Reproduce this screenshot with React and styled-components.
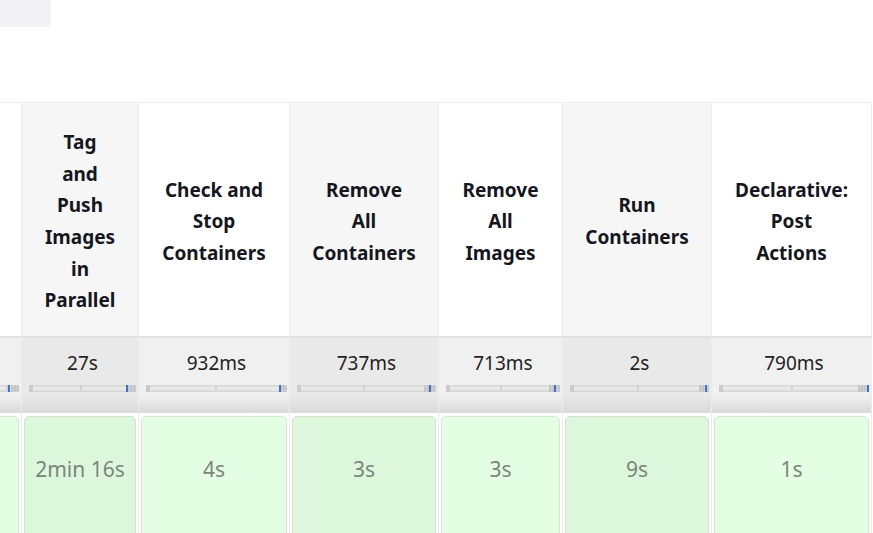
import React from 'react';
import styled, { createGlobalStyle } from 'styled-components';

const GlobalStyle = createGlobalStyle`
  html, body {
    margin: 0;
    padding: 0;
    background: #fff;
    font-family: "Noto Sans", "Open Sans", sans-serif;
  }
`;

const Page = styled.div`
  width: 873px;
  height: 533px;
  overflow: hidden;
  position: relative;
`;

const Crumb = styled.div`
  width: 51px;
  height: 27px;
  background: #f3f3f5;
`;

const Table = styled.div`
  margin-top: 75px;
  display: flex;
  width: 872px;
  border-top: 1px solid #eeeeee;
`;

const Column = styled.div`
  width: ${p => p.$width}px;
  flex: none;
  display: flex;
  flex-direction: column;
  border-left: ${p => (p.$first ? 'none' : '1px solid #ececec')};
  border-right: ${p => (p.$last ? '1px solid #ececec' : 'none')};
  box-sizing: border-box;
  overflow: hidden;
`;

const Header = styled.div`
  height: 233px;
  background: ${p => (p.$stripe ? '#f6f6f6' : '#ffffff')};
  display: flex;
  flex-direction: column;
  align-items: center;
  justify-content: center;
  padding-top: 5px;
  box-sizing: border-box;
  color: #16161f;
  font-size: 19px;
  font-weight: 700;
  line-height: 31.6px;
  text-align: center;
`;

const Line = styled.span`
  display: block;
  white-space: nowrap;
`;

const Average = styled.div`
  height: 77px;
  box-sizing: border-box;
  border-top: 2px solid #e0e0e0;
  background: ${p =>
    p.$stripe
      ? 'linear-gradient(to bottom, #e9e9e9 0%, #e9e9e9 76%, #d9d9d9 100%)'
      : 'linear-gradient(to bottom, #f0f0f0 0%, #f0f0f0 76%, #dadada 100%)'};
  display: flex;
  flex-direction: column;
  align-items: center;
  padding: 12px 2px 0 7px;
`;

const AvgText = styled.div`
  font-size: 19px;
  color: #1f1f24;
  line-height: 26px;
  height: 26px;
`;

const Bar = styled.div`
  position: relative;
  align-self: stretch;
  margin-top: 9px;
  height: 7px;
  display: flex;
  background: linear-gradient(to bottom, #d4d4d4 0%, #ececec 45%, #e4e4e4 70%, #d2d2d2 100%);
`;

const Cap = styled.div`
  width: 4px;
  background: #cbcbcb;
`;

const Track = styled.div`
  flex: 1;
  position: relative;
  &::after {
    content: '';
    position: absolute;
    left: 50%;
    top: 0;
    bottom: 0;
    width: 2px;
    background: #d2d2d2;
  }
`;

const EndCap = styled.div`
  width: ${p => p.$w}px;
  background: repeating-linear-gradient(to right, #c6c6c6 0, #c6c6c6 2px, #d0d0d0 2px, #d0d0d0 3px);
`;

const Tick = styled.div`
  position: absolute;
  top: 0;
  bottom: 0;
  right: ${p => p.$right}px;
  width: 2px;
  background: #3d72d4;
`;

const Body = styled.div`
  background: #ffffff;
  padding: 3px 2px 0 2px;
  flex: 1;
`;

const Cell = styled.div`
  height: 130px;
  box-sizing: border-box;
  border: 1px solid ${p => (p.$stripe ? '#cfe3cf' : '#d3e6d3')};
  border-radius: 5px;
  background: ${p => (p.$stripe ? '#ddf7dd' : '#e4fee4')};
  color: #7b867b;
  font-size: 21px;
  line-height: 28px;
  text-align: center;
  padding-top: 38px;
  white-space: nowrap;
`;

const PartialCell = styled(Cell)`
  margin-left: -20px;
`;

const stages = [
  { width: 21, lines: [], avg: '', time: '', endCap: 8, tick: 9, partial: true },
  { width: 117, lines: ['Tag', 'and', 'Push', 'Images', 'in', 'Parallel'], avg: '27s', time: '2min 16s', endCap: 9, tick: 8, stripe: true },
  { width: 151, lines: ['Check and', 'Stop', 'Containers'], avg: '932ms', time: '4s', endCap: 7, tick: 6 },
  { width: 149, lines: ['Remove', 'All', 'Containers'], avg: '737ms', time: '3s', endCap: 12, tick: 5, stripe: true },
  { width: 124, lines: ['Remove', 'All', 'Images'], avg: '713ms', time: '3s', endCap: 11, tick: 4 },
  { width: 149, lines: ['Run', 'Containers'], avg: '2s', time: '9s', endCap: 10, tick: 2, stripe: true },
  { width: 161, lines: ['Declarative:', 'Post', 'Actions'], avg: '790ms', time: '1s', endCap: 11, tick: 0, last: true },
];

const App = () => (
  <Page>
    <GlobalStyle />
    <Crumb />
    <Table>
      {stages.map((s, i) => (
        <Column key={i} $width={s.width} $first={i === 0} $last={s.last}>
          <Header $stripe={s.stripe}>
            {s.lines.map(l => (
              <Line key={l}>{l}</Line>
            ))}
          </Header>
          <Average $stripe={s.stripe} style={s.partial ? { paddingLeft: 0 } : undefined}>
            <AvgText>{s.avg}</AvgText>
            <Bar>
              {!s.partial && <Cap />}
              <Track />
              <EndCap $w={s.endCap} />
              <Tick $right={s.tick} />
            </Bar>
          </Average>
          <Body>
            {s.partial ? (
              <PartialCell $stripe={s.stripe}>{s.time}</PartialCell>
            ) : (
              <Cell $stripe={s.stripe}>{s.time}</Cell>
            )}
          </Body>
        </Column>
      ))}
    </Table>
  </Page>
);

export default App;
